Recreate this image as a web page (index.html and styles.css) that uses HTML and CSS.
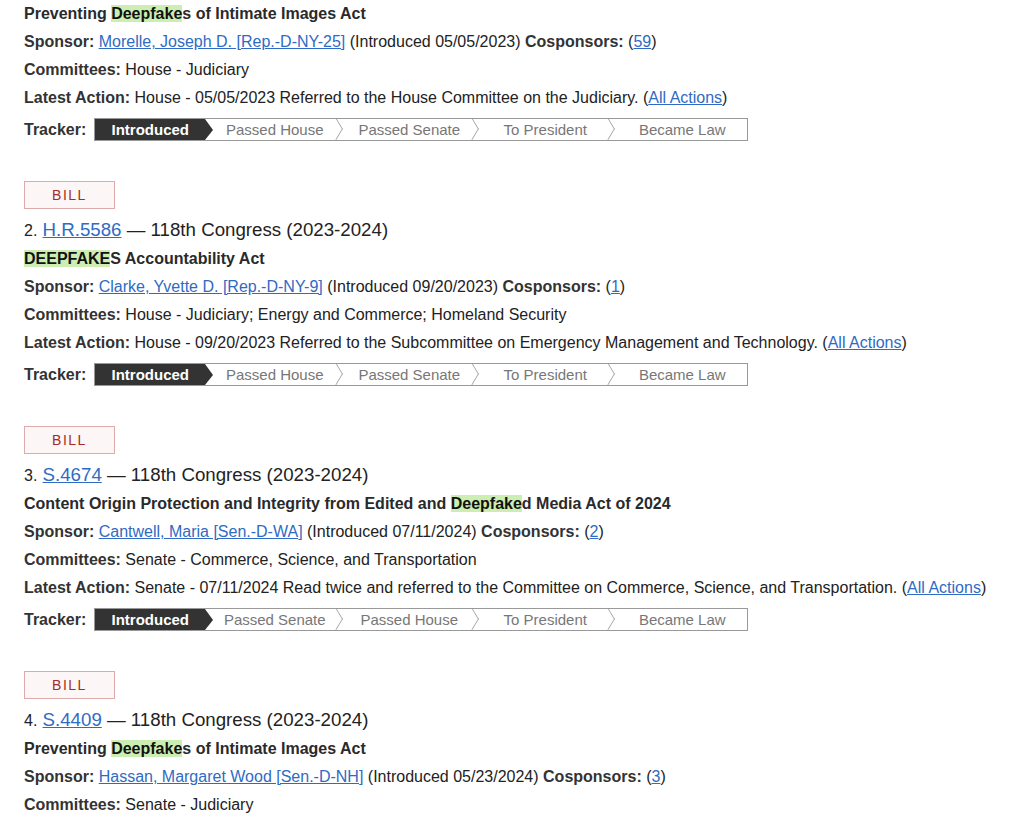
FILE: index.html
```html
<!DOCTYPE html>
<html lang="en">
<head>
  <meta charset="UTF-8" />
  <title>Search Results : Deepfakes</title>
  <link rel="stylesheet" href="styles.css">
</head>
<body>
  <ol class="results">
    <li class="result">
      <div class="title">Preventing <mark>Deepfake</mark>s of Intimate Images Act</div>
      <div class="row"><b>Sponsor:</b> <a href="#">Morelle, Joseph D. [Rep.-D-NY-25]</a> (Introduced 05/05/2023) <b>Cosponsors:</b> (<a href="#">59</a>)</div>
      <div class="row"><b>Committees:</b> House - Judiciary</div>
      <div class="row"><b>Latest Action:</b> House - 05/05/2023 Referred to the House Committee on the Judiciary. (<a href="#">All Actions</a>)</div>
      <div class="tracker">
        <b>Tracker:</b>
        <ul class="steps">
          <li class="done">Introduced</li>
          <li>Passed House</li>
          <li>Passed Senate</li>
          <li>To President</li>
          <li>Became Law</li>
        </ul>
      </div>
    </li>

    <li class="result">
      <span class="badge">BILL</span>
      <div class="heading"><span class="num">2.</span> <a href="#">H.R.5586</a> — 118th Congress (2023-2024)</div>
      <div class="title"><mark>DEEPFAKE</mark>S Accountability Act</div>
      <div class="row"><b>Sponsor:</b> <a href="#">Clarke, Yvette D. [Rep.-D-NY-9]</a> (Introduced 09/20/2023) <b>Cosponsors:</b> (<a href="#">1</a>)</div>
      <div class="row"><b>Committees:</b> House - Judiciary; Energy and Commerce; Homeland Security</div>
      <div class="row"><b>Latest Action:</b> House - 09/20/2023 Referred to the Subcommittee on Emergency Management and Technology. (<a href="#">All Actions</a>)</div>
      <div class="tracker">
        <b>Tracker:</b>
        <ul class="steps">
          <li class="done">Introduced</li>
          <li>Passed House</li>
          <li>Passed Senate</li>
          <li>To President</li>
          <li>Became Law</li>
        </ul>
      </div>
    </li>

    <li class="result">
      <span class="badge">BILL</span>
      <div class="heading"><span class="num">3.</span> <a href="#">S.4674</a> — 118th Congress (2023-2024)</div>
      <div class="title">Content Origin Protection and Integrity from Edited and <mark>Deepfake</mark>d Media Act of 2024</div>
      <div class="row"><b>Sponsor:</b> <a href="#">Cantwell, Maria [Sen.-D-WA]</a> (Introduced 07/11/2024) <b>Cosponsors:</b> (<a href="#">2</a>)</div>
      <div class="row"><b>Committees:</b> Senate - Commerce, Science, and Transportation</div>
      <div class="row"><b>Latest Action:</b> Senate - 07/11/2024 Read twice and referred to the Committee on Commerce, Science, and Transportation. (<a href="#">All Actions</a>)</div>
      <div class="tracker">
        <b>Tracker:</b>
        <ul class="steps">
          <li class="done">Introduced</li>
          <li>Passed Senate</li>
          <li>Passed House</li>
          <li>To President</li>
          <li>Became Law</li>
        </ul>
      </div>
    </li>

    <li class="result">
      <span class="badge">BILL</span>
      <div class="heading"><span class="num">4.</span> <a href="#">S.4409</a> — 118th Congress (2023-2024)</div>
      <div class="title">Preventing <mark>Deepfake</mark>s of Intimate Images Act</div>
      <div class="row"><b>Sponsor:</b> <a href="#">Hassan, Margaret Wood [Sen.-D-NH]</a> (Introduced 05/23/2024) <b>Cosponsors:</b> (<a href="#">3</a>)</div>
      <div class="row"><b>Committees:</b> Senate - Judiciary</div>
    </li>
  </ol>
</body>
</html>
```

FILE: styles.css
```css
body {
  font-family: "Liberation Sans", Arial, sans-serif;
  font-size: 16px;
  color: #222;
  background-color: #fff;
  margin: 0;
  padding: 0 24px;
}

.results {
  list-style: none;
  margin: 0;
  padding: 0;
}

.result {
  margin-bottom: 40px;
}

a {
  color: #2f6bc4;
}

mark {
  background-color: #cdeeb2;
  color: #111;
}

.title,
.row {
  line-height: 28px;
}

.title {
  font-weight: bold;
  color: #2a2a2a;
}

.row b,
.tracker b {
  color: #333;
}

.badge {
  display: inline-block;
  box-sizing: border-box;
  width: 91px;
  height: 28px;
  line-height: 26px;
  text-align: center;
  border: 1px solid #deaaaa;
  background-color: #fdf6f6;
  color: #a52a2a;
  font-size: 14px;
  letter-spacing: 1.5px;
}

.heading {
  margin-top: 6px;
  font-size: 18.7px;
  line-height: 30px;
  color: #222;
}

.heading .num {
  font-size: 16px;
  line-height: 1;
}

.tracker {
  display: flex;
  align-items: center;
  gap: 8px;
  margin-top: 6px;
  height: 23px;
}

.steps {
  display: flex;
  list-style: none;
  margin: 0;
  padding: 0;
  height: 23px;
  border: 1px solid #999;
  box-sizing: border-box;
  overflow: hidden;
}

.steps li {
  position: relative;
  width: 136px;
  text-align: center;
  line-height: 21px;
  font-size: 15px;
  color: #777;
}

.steps li:nth-child(2) {
  padding-left: 3px;
  box-sizing: border-box;
}

.steps li:last-child {
  width: 134px;
  padding-left: 4px;
  box-sizing: border-box;
}

/* chevron between steps */
.steps li::after {
  content: "";
  position: absolute;
  top: 2px;
  right: -3px;
  width: 15px;
  height: 15px;
  border-top: 1px solid #999;
  border-right: 1px solid #999;
  transform: scaleX(0.6) rotate(45deg);
  z-index: 1;
}

.steps li:last-child::after {
  display: none;
}

.steps li.done {
  width: 110px;
  padding-left: 0;
  background-color: #333;
  color: #fff;
  font-weight: bold;
}

.steps li.done::after {
  top: 0;
  right: -8px;
  width: 0;
  height: 0;
  border-top: 11px solid transparent;
  border-bottom: 10px solid transparent;
  border-left: 8px solid #333;
  border-right: none;
  transform: none;
}
```
